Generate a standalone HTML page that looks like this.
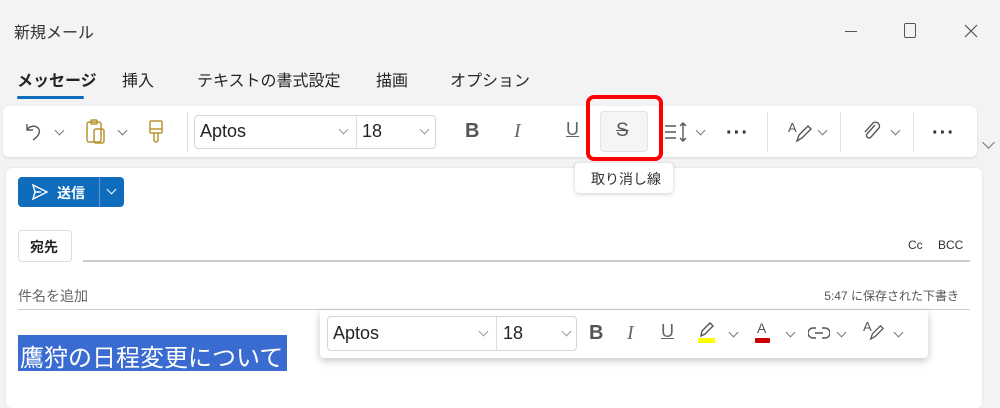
<!DOCTYPE html>
<html><head><meta charset="utf-8"><style>
*{margin:0;padding:0;box-sizing:border-box}
body{width:1000px;height:405px;overflow:hidden;background:#f3f3f6;font-family:"Liberation Sans","Noto Sans CJK JP",sans-serif;color:#242424;position:relative}
.a{position:absolute}
.t{position:absolute;white-space:nowrap}
.chev{position:absolute;width:7px;height:7px;border-right:1.3px solid #777;border-bottom:1.3px solid #777;transform:rotate(45deg)}
.box{position:absolute;border:1px solid #d4d4d4;border-radius:4px;background:#fff}
.dots{position:absolute;font-size:20px;font-weight:bold;letter-spacing:1px;color:#333}
.sep{position:absolute;width:1px;background:#e0e0e0}
</style></head><body>
<div class="t" style="left:14px;top:19px;font-size:16px;color:#333">新規メール</div>
<div class="a" style="left:845px;top:31px;width:12px;height:1px;background:#555"></div>
<div class="a" style="left:904px;top:23px;width:12px;height:15px;border:1.3px solid #555;border-radius:2px"></div>
<svg class="a" style="left:964px;top:24px" width="14" height="14" viewBox="0 0 14 14" stroke="#555" stroke-width="1.2"><path d="M1 1l12 12M13 1L1 13"/></svg>

<div class="t" style="left:17px;top:67px;font-size:16px;font-weight:bold">メッセージ</div>
<div class="t" style="left:122px;top:67px;font-size:16px">挿入</div>
<div class="t" style="left:197px;top:67px;font-size:16px">テキストの書式設定</div>
<div class="t" style="left:376px;top:67px;font-size:16px">描画</div>
<div class="t" style="left:450px;top:67px;font-size:16px">オプション</div>
<div class="a" style="left:17px;top:96px;width:67px;height:3px;border-radius:2px;background:#0f6cbd"></div>

<div class="a" style="left:3px;top:106px;width:974px;height:51px;background:#fff;border-radius:6px;box-shadow:0 1px 2px rgba(0,0,0,.12)"></div>
<svg class="a" style="left:22px;top:120px" width="24" height="24" viewBox="0 0 24 24" fill="none" stroke="#555" stroke-width="1.4"><path d="M5 4v6h6"/><path d="M5 10c2-4 8-5 11-2s1 8-5 12"/></svg>
<div class="chev" style="left:56px;top:127px"></div>
<svg class="a" style="left:84px;top:118px" width="24" height="28" viewBox="0 0 24 28" fill="none" stroke="#b8942f" stroke-width="1.5"><rect x="3" y="4" width="14" height="20" rx="2"/><rect x="7" y="2" width="6" height="4" rx="1"/><rect x="10" y="11" width="10" height="14" rx="2"/></svg>
<div class="chev" style="left:119px;top:127px"></div>
<svg class="a" style="left:146px;top:118px" width="20" height="26" viewBox="0 0 20 26" fill="none" stroke="#b8942f" stroke-width="1.5"><rect x="4" y="3" width="12" height="12" rx="1"/><path d="M4 11h12M8 15v7a2 2 0 0 0 4 0v-7"/></svg>
<div class="sep" style="left:187px;top:112px;height:40px"></div>
<div class="box" style="left:194px;top:115px;width:242px;height:34px"></div>
<div class="a" style="left:356px;top:116px;width:1px;height:32px;background:#ddd"></div>
<div class="t" style="left:200px;top:121px;font-size:18px">Aptos</div>
<div class="chev" style="left:340px;top:126px;border-color:#999"></div>
<div class="t" style="left:362px;top:121px;font-size:18px">18</div>
<div class="chev" style="left:421px;top:126px;border-color:#999"></div>
<div class="t" style="left:465px;top:120px;font-size:20px;font-weight:bold;color:#555">B</div>
<div class="t" style="left:514px;top:120px;font-size:20px;font-style:italic;color:#666;font-family:'Liberation Serif',serif">I</div>
<div class="t" style="left:566px;top:119px;font-size:18px;color:#666;text-decoration:underline">U</div>
<div class="a" style="left:600px;top:111px;width:48px;height:41px;background:#f5f5f5;border:1px solid #e3e3e3;border-radius:4px"></div>
<div class="t" style="left:616px;top:120px;font-size:19px;color:#555;text-decoration:line-through">S</div>
<div class="a" style="left:586px;top:95px;width:77px;height:66px;border:4px solid #f00;border-radius:8px"></div>
<svg class="a" style="left:664px;top:120px" width="26" height="24" viewBox="0 0 26 24" fill="none" stroke="#555" stroke-width="1.4"><path d="M1 6h11M1 12h11M1 18h11M19 3v18M16 6l3-3 3 3M16 18l3 3 3-3"/></svg>
<div class="chev" style="left:697px;top:127px"></div>
<div class="dots" style="left:726px;top:122px">···</div>
<div class="sep" style="left:767px;top:112px;height:40px"></div>
<div class="t" style="left:788px;top:120px;font-size:13px;color:#555">A</div>
<svg class="a" style="left:794px;top:122px" width="18" height="22" viewBox="0 0 18 22" fill="none" stroke="#555" stroke-width="1.4"><path d="M3 19l2-6 9-9 3 3-9 9z"/></svg>
<div class="chev" style="left:819px;top:127px"></div>
<div class="sep" style="left:840px;top:112px;height:40px"></div>
<svg class="a" style="left:862px;top:119px" width="20" height="24" viewBox="0 0 20 24" fill="none" stroke="#555" stroke-width="1.4"><path d="M13 6l-8 9a2.5 2.5 0 0 0 4 3l8-9a4 4 0 0 0-6-5l-8 9"/></svg>
<div class="chev" style="left:892px;top:127px"></div>
<div class="sep" style="left:913px;top:112px;height:40px"></div>
<div class="dots" style="left:932px;top:122px">···</div>
<div class="chev" style="left:984px;top:138px;width:9px;height:9px"></div>

<div class="a" style="left:6px;top:168px;width:976px;height:240px;background:#fff;border-radius:6px;box-shadow:0 0 2px rgba(0,0,0,.1)"></div>
<div class="a" style="left:575px;top:163px;width:98px;height:30px;background:#fff;border-radius:4px;box-shadow:0 1px 4px rgba(0,0,0,.2)"></div>
<div class="t" style="left:591px;top:169px;font-size:14px;color:#333">取り消し線</div>

<div class="a" style="left:18px;top:177px;width:106px;height:30px;background:#0f6cbd;border-radius:4px"></div>
<div class="a" style="left:99px;top:177px;width:1px;height:30px;background:#5a98d4"></div>
<svg class="a" style="left:31px;top:183px" width="18" height="18" viewBox="0 0 18 18" fill="none" stroke="#fff" stroke-width="1.4"><path d="M2 2l14 7-14 7 2-7z M4 9h6"/></svg>
<div class="t" style="left:57px;top:183px;font-size:14px;font-weight:bold;color:#fff">送信</div>
<div class="chev" style="left:108px;top:186px;border-color:#fff"></div>

<div class="a" style="left:18px;top:230px;width:54px;height:32px;border:1px solid #ddd;border-radius:4px"></div>
<div class="t" style="left:30px;top:237px;font-size:14px;font-weight:bold">宛先</div>
<div class="a" style="left:83px;top:260px;width:887px;height:2px;background:#ccc"></div>
<div class="t" style="left:908px;top:238px;font-size:12px;color:#333">Cc</div>
<div class="t" style="left:938px;top:238px;font-size:12px;color:#333">BCC</div>
<div class="t" style="left:18px;top:286px;font-size:14px;color:#666">件名を追加</div>
<div class="t" style="right:41px;top:287px;font-size:12px;color:#555">5:47 に保存された下書き</div>
<div class="a" style="left:18px;top:309px;width:952px;height:1px;background:#ccc"></div>

<div class="a" style="left:18px;top:335px;width:269px;height:36px;background:#3a6bd0"></div>
<div class="t" style="left:20px;top:338px;font-size:24px;color:#fff">鷹狩の日程変更について</div>

<div class="a" style="left:320px;top:310px;width:608px;height:48px;background:#fff;border-radius:4px;box-shadow:0 3px 8px rgba(0,0,0,.22)"></div>
<div class="box" style="left:327px;top:316px;width:250px;height:35px"></div>
<div class="a" style="left:496px;top:317px;width:1px;height:33px;background:#ddd"></div>
<div class="t" style="left:333px;top:323px;font-size:18px">Aptos</div>
<div class="chev" style="left:480px;top:328px;border-color:#999"></div>
<div class="t" style="left:503px;top:323px;font-size:18px">18</div>
<div class="chev" style="left:563px;top:328px;border-color:#999"></div>
<div class="t" style="left:589px;top:322px;font-size:20px;font-weight:bold;color:#555">B</div>
<div class="t" style="left:627px;top:322px;font-size:20px;font-style:italic;color:#666;font-family:'Liberation Serif',serif">I</div>
<div class="t" style="left:661px;top:321px;font-size:18px;color:#666;text-decoration:underline">U</div>
<svg class="a" style="left:698px;top:322px" width="18" height="16" viewBox="0 0 18 16" fill="none" stroke="#555" stroke-width="1.4"><path d="M3 14l1-5 8-8 3 3-8 8z"/></svg>
<div class="a" style="left:698px;top:338px;width:17px;height:5px;background:#ff0"></div>
<div class="chev" style="left:730px;top:329px"></div>
<div class="t" style="left:757px;top:320px;font-size:14px;color:#555">A</div>
<div class="a" style="left:755px;top:338px;width:15px;height:5px;background:#c00;border-radius:1px"></div>
<div class="chev" style="left:787px;top:329px"></div>
<svg class="a" style="left:808px;top:326px" width="22" height="14" viewBox="0 0 22 14" fill="none" stroke="#555" stroke-width="1.4"><path d="M8 2H5a5 5 0 0 0 0 10h3M14 2h3a5 5 0 0 1 0 10h-3M7 7h8"/></svg>
<div class="chev" style="left:838px;top:329px"></div>
<div class="t" style="left:863px;top:319px;font-size:13px;color:#555">A</div>
<svg class="a" style="left:868px;top:322px" width="16" height="20" viewBox="0 0 18 22" fill="none" stroke="#555" stroke-width="1.4"><path d="M3 19l2-6 9-9 3 3-9 9z"/></svg>
<div class="chev" style="left:895px;top:329px"></div>
</body></html>
